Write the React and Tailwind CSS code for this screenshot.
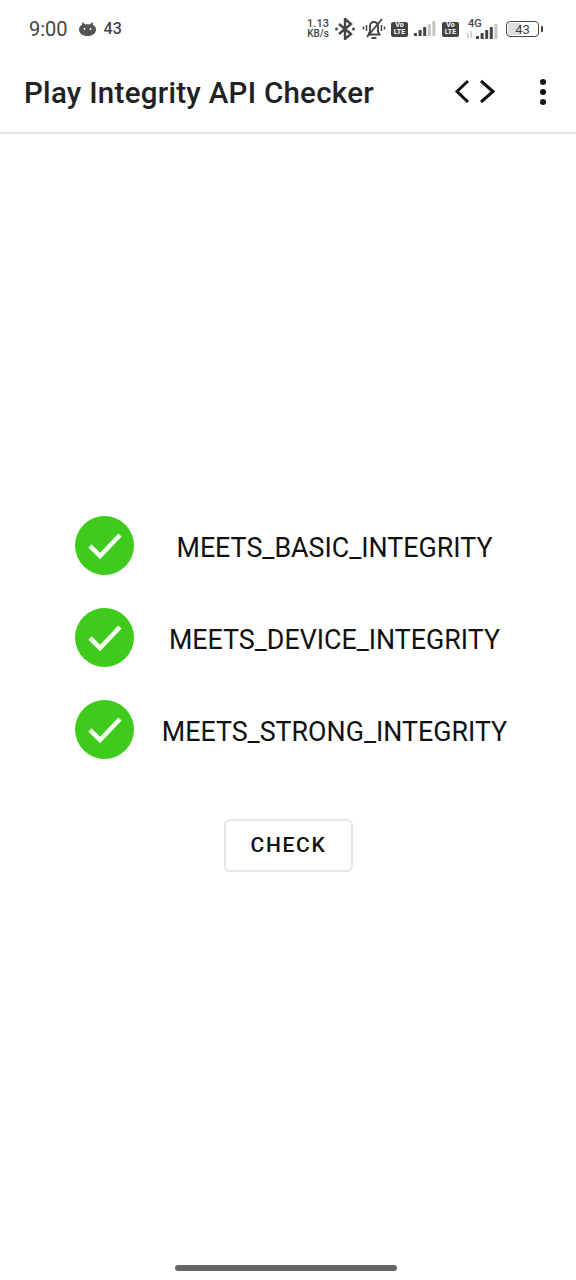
const font = { fontFamily: "Roboto, sans-serif" };

function Bars({ dark = 2, x = 0 }) {
  const hs = [3, 6, 9, 12, 15];
  return (
    <g>
      {hs.map((h, i) => (
        <rect key={i} x={x + i * 4.6} y={16 - h} width="3" height={h} fill={i < dark + 1 ? "#444" : "#c4c4c4"} rx="0.5" />
      ))}
    </g>
  );
}

function VoLte() {
  return (
    <div className="flex h-[15px] w-[17px] flex-col items-center justify-center rounded-[2px] bg-[#444] text-[7px] font-bold leading-[7px] text-white">
      <span>Vo</span>
      <span>LTE</span>
    </div>
  );
}

function StatusBar() {
  return (
    <div className="flex h-[58px] items-center pl-[29px] pr-[33px] text-[#444]">
      <span className="text-[20px] leading-none">9:00</span>
      <svg className="ml-[10px]" width="19" height="16" viewBox="0 0 19 16">
        <path d="M1 8.5 C1 6 2.5 4.5 4 4 L4.5 1 L7.5 3.4 C8.5 3.2 10.5 3.2 11.5 3.4 L14.5 1 L15 4 C16.5 4.5 18 6 18 8.5 C18 12.5 14.5 15 9.5 15 C4.5 15 1 12.5 1 8.5 Z" fill="#555" />
        <circle cx="6.5" cy="8" r="0.9" fill="#fff" />
        <circle cx="12.5" cy="8" r="0.9" fill="#fff" />
      </svg>
      <span className="ml-[7px] text-[16px] font-medium leading-none">43</span>
      <div className="ml-auto flex items-center">
        <div className="flex w-[24px] flex-col items-center text-[11px] font-medium leading-[10px]">
          <span>1.13</span>
          <span className="text-[10px]">KB/s</span>
        </div>
        <svg className="ml-[5px]" width="20" height="22" viewBox="0 0 20 22" fill="none" stroke="#444" strokeWidth="2.4">
          <path d="M4 6 L16 16 L10 21 L10 1 L16 6 L4 16" />
          <circle cx="1.5" cy="11" r="1.5" fill="#444" stroke="none" />
          <circle cx="18.5" cy="11" r="1.5" fill="#444" stroke="none" />
        </svg>
        <svg className="ml-[7px]" width="24" height="24" viewBox="0 0 24 24" fill="none" stroke="#444" strokeWidth="1.9">
          <path d="M6.5 17.5 H17.5 L16 14.5 V9 C16 6.5 14.5 5 12 5 C9.5 5 8 6.5 8 9 V14.5 Z" />
          <path d="M9.5 21 H14.5" />
          <path d="M5 20 L20 2" />
          <path d="M4.5 8 V14 M1.5 9.5 V12.5 M19.5 8 V14 M22.5 9.5 V12.5" strokeWidth="1.5" />
        </svg>
        <div className="ml-[5px]"><VoLte /></div>
        <svg className="ml-[6px]" width="24" height="18" viewBox="0 0 24 18">
          <Bars dark={2} x={0} />
        </svg>
        <div className="ml-[4px]"><VoLte /></div>
        <div className="relative ml-[7px] h-[22px] w-[33px]">
          <span className="absolute left-[2px] top-0 text-[11px] font-medium leading-none">4G</span>
          <svg className="absolute bottom-0 left-0" width="33" height="17" viewBox="0 0 33 17">
            <path d="M2 10 V15 M5 8 V15" stroke="#bdbdbd" strokeWidth="1.3" />
            <Bars dark={3} x={10} />
          </svg>
        </div>
        <div className="relative ml-[7px] flex h-[16px] w-[33px] items-center justify-center overflow-hidden rounded-[4px] border-[1.5px] border-[#444] text-[13px] leading-none">
          <div className="absolute inset-y-[1px] left-[1px] w-[13px] bg-[#dedede]" />
          <span className="relative">43</span>
        </div>
        <div className="ml-[2px] h-[6px] w-[2px] rounded-r-[1px] bg-[#444]" />
      </div>
    </div>
  );
}

function Header() {
  return (
    <div className="flex h-[76px] items-center border-b-2 border-[#e3e3e3] pb-[2px] pl-[24px] pr-[30px]">
      <h1 className="text-[29.5px] font-medium leading-none tracking-[0.28px] text-[#212121]">Play Integrity API Checker</h1>
      <svg className="mb-[5px] ml-auto" width="42" height="28" viewBox="0 0 42 28" fill="none" stroke="#111" strokeWidth="3">
        <path d="M14 3 L3 13.5 L14 24" />
        <path d="M27 3 L39 13.5 L27 24" />
      </svg>
      <div className="mb-[5px] ml-[44px] flex flex-col gap-[4px]">
        <span className="h-[6px] w-[6px] rounded-full bg-[#111]" />
        <span className="h-[6px] w-[6px] rounded-full bg-[#111]" />
        <span className="h-[6px] w-[6px] rounded-full bg-[#111]" />
      </div>
    </div>
  );
}

function Row({ label }) {
  return (
    <div className="flex h-[59px] items-center pl-[75px] pr-[41px]">
      <div className="flex h-[59px] w-[59px] shrink-0 items-center justify-center rounded-full bg-[#3fcb1b]">
        <svg width="36" height="30" viewBox="0 0 36 30" fill="none" stroke="#f4fff0" strokeWidth="4.6">
          <path d="M3 15 L13 25 L33 4" />
        </svg>
      </div>
      <span className="flex-1 pt-[6px] text-center text-[26.8px] leading-none text-[#111]">{label}</span>
    </div>
  );
}

export default function App() {
  return (
    <div className="flex h-[1280px] w-[576px] flex-col bg-white" style={font}>
      <StatusBar />
      <Header />
      <main className="flex flex-1 flex-col pt-[382px]">
        <div className="flex flex-col gap-[33px]">
          <Row label="MEETS_BASIC_INTEGRITY" />
          <Row label="MEETS_DEVICE_INTEGRITY" />
          <Row label="MEETS_STRONG_INTEGRITY" />
        </div>
        <button className="mt-[60px] h-[53px] w-[129px] self-center rounded-[6px] border-2 border-[#e6e6e6] pl-[1px] pt-[1px] text-[21px] font-medium tracking-[1.7px] text-[#111]">
          CHECK
        </button>
      </main>
      <div className="flex h-[24px] justify-center">
        <div className="mr-[5px] mt-[9px] h-[6px] w-[222px] rounded-full bg-[#666]" />
      </div>
    </div>
  );
}
